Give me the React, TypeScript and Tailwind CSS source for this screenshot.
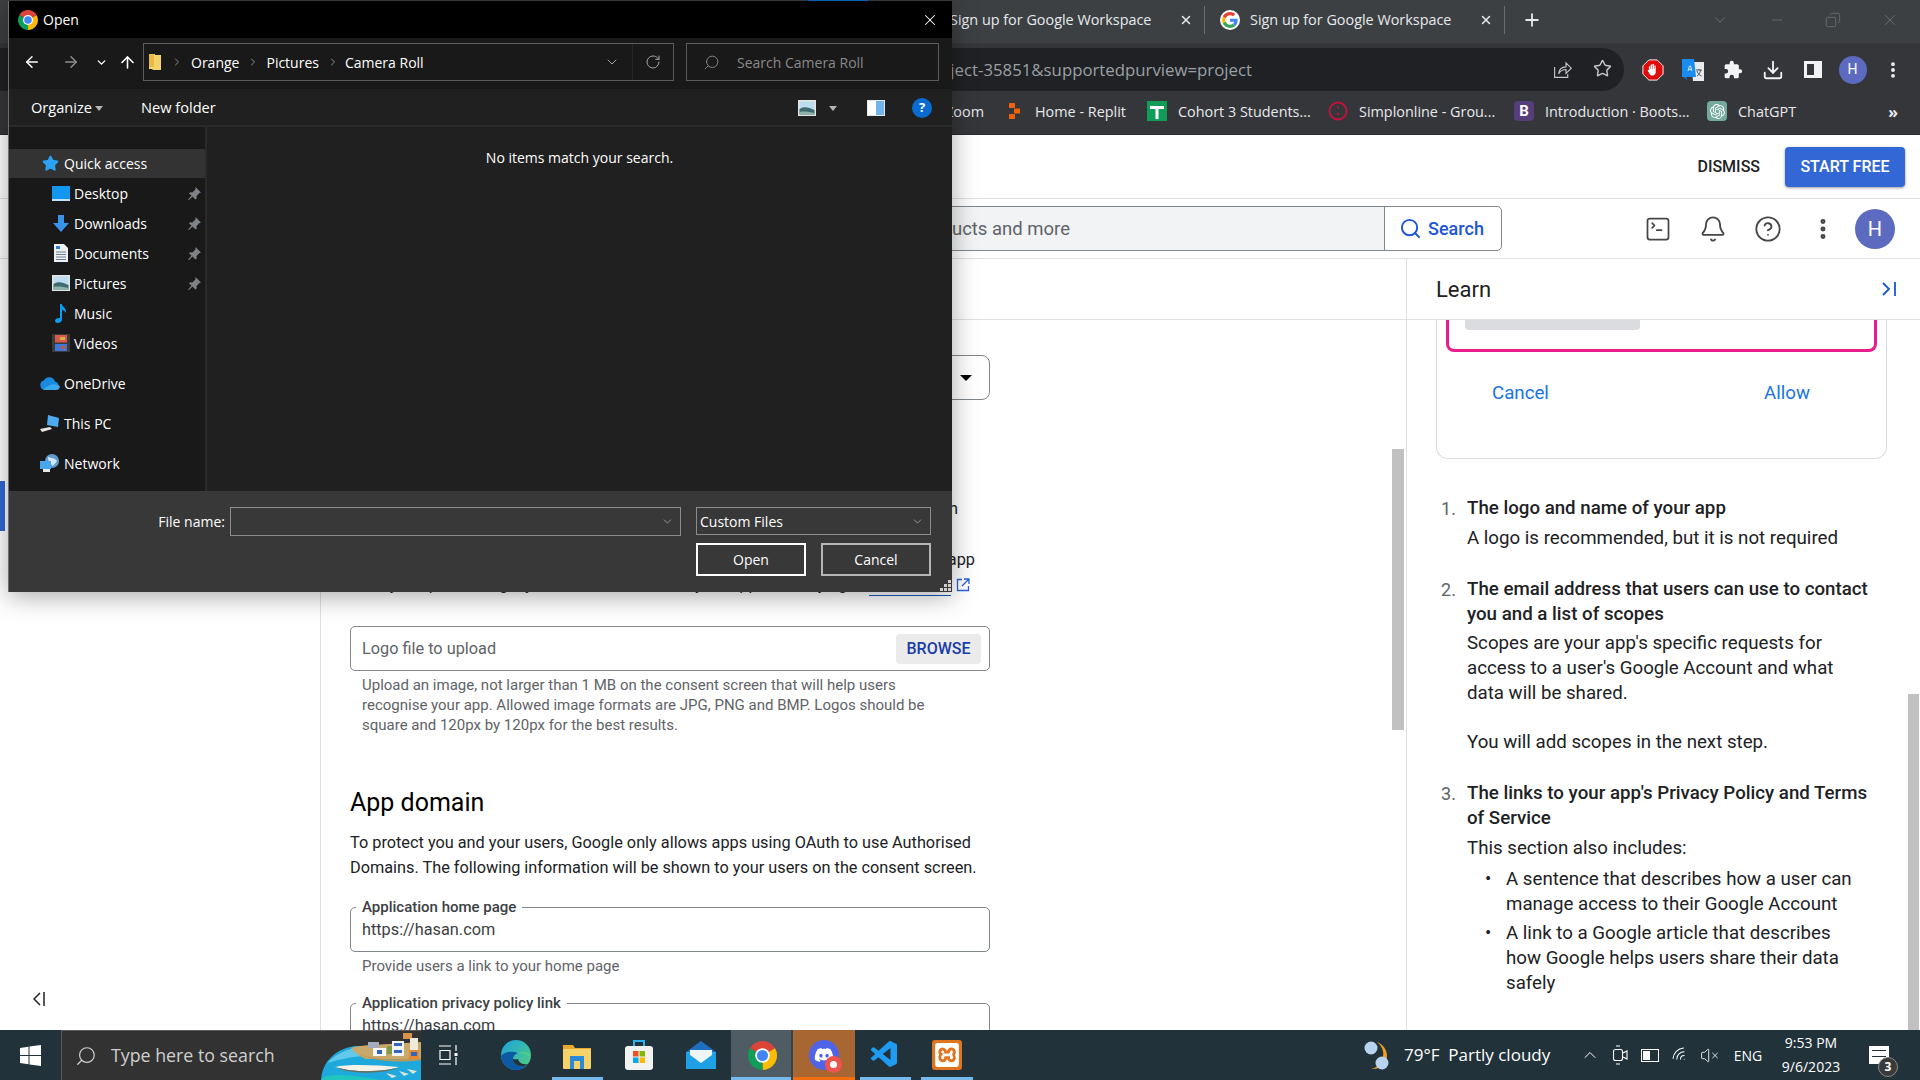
import {
  ArrowLeft,
  ArrowRight,
  ArrowUp,
  Bell,
  ChevronDown,
  ChevronRight,
  ChevronUp,
  CircleHelp,
  Copy,
  Download,
  EllipsisVertical,
  Minus,
  Plus,
  RotateCw,
  Search,
  SquareTerminal,
  Star,
  VolumeX,
  Wifi,
  X,
} from "lucide-react";
import { FaDiscord } from "react-icons/fa";
import { SiOpenai, SiXampp } from "react-icons/si";
import { VscVscode } from "react-icons/vsc";

const win = "font-['Open_Sans',sans-serif]";

function ChromeLogo({ size = 18 }: { size?: number }) {
  return (
    <svg width={size} height={size} viewBox="0 0 48 48">
      <path d="M24 24 41.3 14A20 20 0 0 0 6.7 14Z" fill="#db4437" />
      <path d="M24 24 41.3 14A20 20 0 0 1 24 44Z" fill="#fbbc05" />
      <path d="M24 24 24 44A20 20 0 0 1 6.7 14Z" fill="#0f9d58" />
      <circle cx="24" cy="24" r="10" fill="#fff" />
      <circle cx="24" cy="24" r="7.6" fill="#4285f4" />
    </svg>
  );
}

function GoogleLogo() {
  return (
    <svg width="20" height="20" viewBox="-6 -6 60 60">
      <circle cx="24" cy="24" r="30" fill="#fff" />
      <path fill="#EA4335" d="M24 9.5c3.54 0 6.71 1.22 9.21 3.6l6.85-6.85C35.9 2.38 30.47 0 24 0 14.62 0 6.51 5.38 2.56 13.22l7.98 6.19C12.43 13.72 17.74 9.5 24 9.5z" />
      <path fill="#4285F4" d="M46.98 24.55c0-1.57-.15-3.09-.38-4.55H24v9.02h12.94c-.58 2.96-2.26 5.48-4.78 7.18l7.73 6c4.51-4.18 7.09-10.36 7.09-17.65z" />
      <path fill="#FBBC05" d="M10.53 28.59c-.48-1.45-.76-2.99-.76-4.59s.27-3.14.76-4.59l-7.98-6.19C.92 16.46 0 20.12 0 24c0 3.88.92 7.54 2.56 10.78l7.97-6.19z" />
      <path fill="#34A853" d="M24 48c6.48 0 11.93-2.13 15.89-5.81l-7.73-6c-2.15 1.45-4.92 2.3-8.16 2.3-6.26 0-11.57-4.22-13.47-9.91l-7.98 6.19C6.51 42.62 14.62 48 24 48z" />
    </svg>
  );
}

function Tab() {
  return (
    <div className="flex h-[42px] w-[300px] shrink-0 items-center pb-[4px] pl-[15px]">
      <GoogleLogo />
      <span className={`${win} ml-[10px] w-[218px] text-[14.4px] whitespace-nowrap text-[#e8eaed]`}>Sign up for Google Workspace</span>
      <X className="ml-[11px] text-[#e8eaed]" size={14} strokeWidth={2.5} />
      <div className="ml-auto h-[28px] w-px bg-[#6b6f73]" />
    </div>
  );
}

function Bookmark({ icon, label, width }: { icon: React.ReactNode; label: string; width: string }) {
  return (
    <div className={`flex shrink-0 items-center ${width}`}>
      <div className="mr-[11px] flex w-[20px] justify-center">{icon}</div>
      <span className={`${win} text-[14.4px] whitespace-nowrap text-[#e8eaed]`}>{label}</span>
    </div>
  );
}

function TabStrip() {
  return (
    <div className="h-[43px] bg-[#3c4043]">
      <div className="ml-[808px] h-px w-[60px] bg-[#0a6cd0]" />
      <div className="flex">
        <div className="flex h-[42px] w-[1505px] justify-end">
          <Tab />
          <Tab />
        </div>
        <div className="ml-[17px] flex h-[42px] w-[20px] items-center justify-center pb-[4px] text-[#e8eaed]">
          <Plus size={22} strokeWidth={2.2} />
        </div>
        <div className="ml-auto flex h-[42px] items-center pb-[4px] text-[#777b80]">
          <ChevronDown size={18} strokeWidth={1} className="mr-[40px]" />
          <Minus size={16} strokeWidth={1} className="mr-[40px]" />
          <Copy size={16} strokeWidth={1} className="mr-[40px] scale-x-[-1]" />
          <X size={18} strokeWidth={1} className="mr-[21px]" />
        </div>
      </div>
    </div>
  );
}

function AddressRow() {
  return (
    <div className="flex h-[48px] items-end bg-[#35363a]">
      <div className="flex h-[43px] w-[1624px] items-center rounded-r-full bg-[#202124]">
        <div className="flex w-[1252px] justify-end overflow-hidden">
          <span className={`${win} shrink-0 text-[16.8px] whitespace-nowrap text-[#9aa0a6]`}>
            project-35851&amp;supportedpurview=project
          </span>
        </div>
        <div className="ml-auto mr-[2px] flex text-[#c4c7ca]">
          <div className="flex w-10 justify-center">
            <svg width="21" height="21" viewBox="0 0 24 24" fill="none" stroke="currentColor" strokeWidth="1.300">
              <path d="M3 9v12h15v-4" />
              <path d="M7.500 17c.5-5 4-8 8.500-8V4.500l6 6-6 6V12c-3.500 0-6.500 1.500-8.500 5z" />
            </svg>
          </div>
          <div className="flex w-10 justify-center"><Star size={19} strokeWidth={1.8} /></div>
        </div>
      </div>
      <div className="ml-[9px] flex h-[43px] items-center text-[#f1f3f4]">
        <div className="flex w-10 justify-center">
          <svg width="22" height="22" viewBox="0 0 24 24">
            <path d="M7.5 1h9L23 7.5v9L16.5 23h-9L1 16.500v-9z" fill="#e00b0b" stroke="#fff" strokeWidth="1" />
            <path d="M7.500 12V8h1.500v3h.5V6h1.500v5h.5V5.500h1.500V11h.5V7h1.500v7.500c0 2-1.500 3.500-3.500 3.500s-3-1-3.800-2.800L6 12.500c.4-.6 1-.7 1.500-.5z" fill="#fff" />
          </svg>
        </div>
        <div className="flex w-10 justify-center">
          <svg width="22" height="24" viewBox="0 0 22 24">
            <path d="M9 4h13v19H11z" fill="#e8eaed" />
            <path d="M0 1h12l2 18H4l1 3-3-3H0z" fill="#1a8cf0" />
            <path d="M6 13l1.500-5h1l1.500 5M7 11.500h2" stroke="#fff" strokeWidth=".8" fill="none" />
            <path d="M14 12h6M17 11v1M15 18c2-1 3-3 3.500-6M15 13c.5 2 2 4 4.500 5" stroke="#444" strokeWidth=".9" fill="none" />
          </svg>
        </div>
        <div className="flex w-10 justify-center">
          <svg width="20" height="20" viewBox="0 0 24 24" fill="#f1f3f4">
            <path d="M20.500 11H19V7a2 2 0 0 0-2-2h-4V3.500a2.500 2.500 0 0 0-5 0V5H4a2 2 0 0 0-2 2v3.800h1.500a2.700 2.700 0 0 1 0 5.400H2V20a2 2 0 0 0 2 2h3.800v-1.500a2.700 2.700 0 0 1 5.400 0V22H17a2 2 0 0 0 2-2v-4h1.500a2.500 2.500 0 0 0 0-5z" />
          </svg>
        </div>
        <div className="flex w-10 justify-center"><Download size={22} strokeWidth={2} /></div>
        <div className="flex w-[39px] justify-center">
          <div className="h-[17px] w-[18px] border-[3px] border-r-[8px] border-[#f1f3f4] bg-[#35363a]" />
        </div>
        <div className="flex w-[41px] justify-center">
          <div className="flex h-[28px] w-[28px] items-center justify-center rounded-full bg-[#5c6bc0] font-[Roboto,sans-serif] text-[14px] text-white">H</div>
        </div>
        <div className="flex w-10 justify-center"><EllipsisVertical size={20} strokeWidth={2.6} /></div>
      </div>
    </div>
  );
}

function BookmarkRow() {
  return (
    <div className="flex h-[44px] items-center border-b border-[#2b2c2f] bg-[#35363a] pb-[2px]">
      <div className="flex w-[984px] shrink-0 justify-end">
        <span className={`${win} text-[14.4px] text-[#e8eaed]`}>Zoom</span>
      </div>
      <div className="flex pl-[20px]">
        <Bookmark
          width="w-[143px]"
          label="Home - Replit"
          icon={
            <svg width="16" height="16" viewBox="0 0 16 16" fill="#f26207">
              <rect x="3" y="0" width="6" height="5" rx=".6" />
              <rect x="8" y="5.500" width="6" height="5" rx=".6" />
              <rect x="3" y="11" width="6" height="5" rx=".6" />
            </svg>
          }
        />
        <Bookmark
          width="w-[181px]"
          label="Cohort 3 Students..."
          icon={
            <svg width="20" height="20" viewBox="0 0 20 20">
              <rect width="20" height="20" fill="#0f9d58" />
              <path d="M3 5h14v3h-5.500v10h-3V8H3z" fill="#fff" />
            </svg>
          }
        />
        <Bookmark
          width="w-[186px]"
          label="Simplonline - Grou..."
          icon={
            <svg width="20" height="20" viewBox="0 0 20 20" fill="none">
              <circle cx="10" cy="10" r="8.500" stroke="#c2133f" strokeWidth="1.800" />
              <path d="M10 5.500v2M10 12v2" stroke="#c2133f" strokeWidth="1.800" />
            </svg>
          }
        />
        <Bookmark
          width="w-[193px]"
          label="Introduction · Boots..."
          icon={
            <div className="flex h-[20px] w-[20px] items-center justify-center rounded-[4px] bg-[#563d7c] font-[Roboto,sans-serif] text-[15px] font-bold text-white">B</div>
          }
        />
        <Bookmark
          width="w-[100px]"
          label="ChatGPT"
          icon={
            <div className="flex h-[20px] w-[20px] items-center justify-center rounded-[4px] bg-[#74aa9c] text-white">
              <SiOpenai size={15} />
            </div>
          }
        />
      </div>
      <span className={`${win} ml-auto mr-[22px] text-[16px] font-bold text-[#e8eaed]`}>»</span>
    </div>
  );
}

function OutlineField({ label, value, className }: { label: string; value: string; className: string }) {
  return (
    <div className={`relative flex h-[45px] w-[640px] items-center rounded-[5px] border border-[#80868b] px-[11px] pt-[2px] ${className}`}>
      <span className="absolute -top-[10px] left-[5px] bg-white px-[6px] text-[15px] leading-[18px] font-medium text-[#3c4043]">{label}</span>
      <span className="text-[16.3px] text-[#3c4043]">{value}</span>
    </div>
  );
}

function FormColumn() {
  return (
    <div className="pl-[29px] text-[16.3px] text-[#202124]">
      <div className="mt-[35px] flex h-[45px] w-[640px] items-center justify-end rounded-[8px] border border-[#80868b] pr-[17px]">
        <div className="h-0 w-0 border-x-[6px] border-t-[6px] border-x-transparent border-t-black" />
      </div>
      <div className="mt-[97px] flex h-6 w-[608px] items-center justify-end whitespace-nowrap">with</div>
      <div className="mt-[27px] flex h-6 w-[625px] items-center justify-end whitespace-nowrap">app</div>
      <div className="mt-px flex h-6 items-center whitespace-nowrap">
        <span className="w-[519px] overflow-hidden">After you upload a logo, you will need to submit your app for verifying</span>
        <span className="w-[82px] border-b border-[#1a56c4] leading-[21px] text-[#1a56c4]">Learn more</span>
        <svg className="ml-[5px]" width="14" height="14" viewBox="0 0 14 14" fill="none" stroke="#2a62d8" strokeWidth="1.300">
          <path d="M6 1.500H1.500v11h11V8M8 1h5v5M13 1 6 8" />
        </svg>
      </div>
      <div className="mt-[29px] flex h-[45px] w-[640px] items-center justify-between rounded-[5px] border border-[#80868b] pr-2 pl-[11px]">
        <span className="pt-[1px] text-[#5f6368]">Logo file to upload</span>
        <span className="flex h-[30px] w-[85px] items-center justify-center rounded-[4px] bg-[#ebebeb] text-[16px] font-medium text-[#1a3ca8]">BROWSE</span>
      </div>
      <p className="mt-1 w-[590px] pl-3 text-[15px] leading-5 text-[#5f6368]">
        Upload an image, not larger than 1 MB on the consent screen that will help users recognise your app. Allowed image formats are JPG, PNG and BMP. Logos should be square and 120px by 120px for the best results.
      </p>
      <h2 className="mt-[52px] text-[25px] leading-8 font-normal text-black">App domain</h2>
      <p className="mt-[11px] w-[640px] leading-[25px]">
        To protect you and your users, Google only allows apps using OAuth to use Authorised Domains. The following information will be shown to your users on the consent screen.
      </p>
      <OutlineField className="mt-[27px]" label="Application home page" value="https://hasan.com" />
      <p className="mt-1 pl-3 text-[15px] leading-5 text-[#5f6368]">Provide users a link to your home page</p>
      <OutlineField className="mt-[27px]" label="Application privacy policy link" value="https://hasan.com" />
    </div>
  );
}

function ListItem({ n, title, children }: { n: number; title: string; children: React.ReactNode }) {
  return (
    <div className="flex">
      <span className="w-[26px] shrink-0 text-[18px] text-[#5f6368]">{n}.</span>
      <div className="w-[410px]">
        <div className="text-[18.7px] font-medium">{title}</div>
        {children}
      </div>
    </div>
  );
}

function Bullet({ children, className }: { children: React.ReactNode; className: string }) {
  return (
    <div className={`flex ${className}`}>
      <span className="w-[39px] pl-[18px]">•</span>
      <span className="w-[352px]">{children}</span>
    </div>
  );
}

function LearnPanel() {
  return (
    <div className="relative flex w-[514px] shrink-0 flex-col border-l border-[#e0e0e0]">
      <div className="flex h-[61px] shrink-0 items-center justify-between border-b border-[#e0e0e0] pr-[24px] pl-[29px]">
        <span className="text-[22px] text-[#202124]">Learn</span>
        <svg width="14" height="14" viewBox="0 0 14 14" fill="none" stroke="#1a56d6" strokeWidth="1.800">
          <path d="M1 1l6 6-6 6M13 0v14" />
        </svg>
      </div>
      <div className="flex-1 overflow-hidden pl-[29px] text-[18.7px] leading-[25px] text-[#202124]">
        <div className="h-[139px] w-[451px] rounded-b-xl border-x border-b border-[#dadce0]">
          <div className="mx-[9px] h-[32px] rounded-b-lg border-x-[3px] border-b-[3px] border-[#e91e8c] pl-[16px]">
            <div className="h-[10px] w-[175px] rounded-b-[4px] bg-[#dadce0]" />
          </div>
          <div className="mt-[29px] flex pl-[55px] text-[#1a73e8]">
            <span className="w-[272px]">Cancel</span>
            <span>Allow</span>
          </div>
        </div>
        <div className="mt-[37px] pl-[5px]">
          <ListItem n={1} title="The logo and name of your app">
            <p className="mt-[5px]">A logo is recommended, but it is not required</p>
          </ListItem>
          <div className="mt-[26px]">
            <ListItem n={2} title="The email address that users can use to contact you and a list of scopes">
              <p className="mt-[4px] w-[395px]">Scopes are your app's specific requests for access to a user's Google Account and what data will be shared.</p>
              <p className="mt-[24px]">You will add scopes in the next step.</p>
            </ListItem>
          </div>
          <div className="mt-[26px]">
            <ListItem n={3} title="The links to your app's Privacy Policy and Terms of Service">
              <p className="mt-[5px]">This section also includes:</p>
              <Bullet className="mt-[6px]">A sentence that describes how a user can manage access to their Google Account</Bullet>
              <Bullet className="mt-[4px]">A link to a Google article that describes how Google helps users share their data safely</Bullet>
            </ListItem>
          </div>
        </div>
      </div>
      <div className="absolute top-[435px] right-[1px] h-[336px] w-[11px] bg-[#c1c1c1]" />
    </div>
  );
}

function PageBody() {
  return (
    <div className="flex min-h-0 flex-1 flex-col bg-white font-[Roboto,sans-serif]">
      <div className="flex h-[64px] shrink-0 items-center justify-end border-b border-[#e0e0e0] pr-[15px]">
        <span className="mr-[25px] text-[16px] font-medium text-[#202124]">DISMISS</span>
        <span className="flex h-[40px] w-[120px] items-center justify-center rounded-[4px] bg-[#3367d6] text-[16px] font-medium text-white shadow-[0_1px_3px_rgba(0,0,0,0.4)]">START FREE</span>
      </div>
      <div className="flex h-[60px] shrink-0 items-center border-b border-[#e0e0e0]">
        <div className="ml-[500px] flex h-[45px] w-[1002px] rounded-[5px] border border-[#80868b] bg-[#f1f3f4]">
          <div className="flex w-[569px] shrink-0 items-center justify-end overflow-hidden pt-[2px]">
            <span className="shrink-0 text-[18.5px] whitespace-nowrap text-[#5f6368]">Search (/) for resources, docs, products and more</span>
          </div>
          <div className="ml-auto flex w-[117px] items-center justify-center gap-[6px] rounded-r-[5px] border-l border-[#80868b] bg-white pr-[3px] text-[18px] font-medium text-[#1a56d6]">
            <Search size={23} strokeWidth={2} />
            Search
          </div>
        </div>
        <div className="ml-auto flex items-center pr-[25px] text-[#444746]">
          <div className="flex w-[55px] justify-center"><SquareTerminal size={28} strokeWidth={1.5} /></div>
          <div className="flex w-[55px] justify-center"><Bell size={28} strokeWidth={1.6} /></div>
          <div className="flex w-[55px] justify-center"><CircleHelp size={28} strokeWidth={1.6} /></div>
          <div className="flex w-[55px] justify-center"><EllipsisVertical size={26} strokeWidth={2.6} /></div>
          <div className="ml-[5px] flex h-[40px] w-[40px] items-center justify-center rounded-full bg-[#5c6bc0] text-[20px] text-white">H</div>
        </div>
      </div>
      <div className="flex min-h-0 flex-1">
        <div className="w-[321px] shrink-0 border-r border-[#e0e0e0]">
          <div className="mt-[222px] h-[50px] w-[5px] bg-[#3367d6]" />
          <svg className="mt-[461px] ml-[33px]" width="12" height="14" viewBox="0 0 12 14" fill="none" stroke="#202124" strokeWidth="1.500">
            <path d="M7 1 1 7l6 6M11 0v14" />
          </svg>
        </div>
        <div className="relative min-w-0 flex-1 overflow-hidden">
          <div className="h-[61px] border-b border-[#e0e0e0]" />
          <FormColumn />
          <div className="absolute top-[190px] right-[2px] h-[281px] w-[12px] bg-[#c1c1c1]" />
        </div>
        <LearnPanel />
      </div>
    </div>
  );
}

function Pin() {
  return (
    <svg className="ml-auto mr-[4px]" width="13" height="13" viewBox="0 0 13 13" fill="#7d8388">
      <path d="M7.500 0 13 5.500l-1.500.6-3 3 .2 2.400-1.200 1L4.500 9.500 1 13l-1-.2L3.500 8.500 1 6.500l1-1.200 2.400.2 3-3z" />
    </svg>
  );
}

function SideItem({ icon, label, pinned, className = "" }: { icon: React.ReactNode; label: string; pinned?: boolean; className?: string }) {
  return (
    <div className={`flex h-[30px] items-center pl-[40px] ${className}`}>
      <div className="flex w-[24px] justify-center">{icon}</div>
      <span className="ml-[1px] text-[14px] text-white">{label}</span>
      {pinned && <Pin />}
    </div>
  );
}

function SideRoot({ icon, label, className = "" }: { icon: React.ReactNode; label: string; className?: string }) {
  return (
    <div className={`flex h-[30px] items-center pl-[29px] ${className}`}>
      <div className="flex w-[24px] justify-center">{icon}</div>
      <span className="ml-[2px] text-[14px] text-white">{label}</span>
    </div>
  );
}

const PictureIcon = ({ w = 18, h = 16 }: { w?: number; h?: number }) => (
  <svg width={w} height={h} viewBox="0 0 18 16">
    <rect width="18" height="16" fill="#e6e6e6" />
    <rect x="1.500" y="1.500" width="15" height="13" fill="#bcdcf0" />
    <path d="M1.500 9c4-3 9-2 15 1v4.500h-15z" fill="#3d6b6f" />
    <path d="M1.500 12c5-1 10 0 15 1v1.500h-15z" fill="#8fb3a8" />
  </svg>
);

function OpenDialog() {
  return (
    <div className={`${win} absolute top-px left-[8px] flex h-[591px] w-[944px] flex-col border-l border-[#6e6e6e] shadow-[0_4px_24px_rgba(0,0,0,0.35)]`}>
      <div className="flex h-[37px] shrink-0 items-center bg-black pl-[7px] text-white">
        <ChromeLogo size={24} />
        <span className="ml-[3px] text-[14px]">Open</span>
        <X className="ml-auto mr-[13px]" size={18} strokeWidth={1.4} />
      </div>
      <div className="flex h-[51px] shrink-0 items-center bg-[#191919] pb-[3px] text-white">
        <div className="flex w-[46px] justify-center"><ArrowLeft size={18} strokeWidth={2} /></div>
        <div className="flex w-[32px] justify-center text-[#8d8d8d]"><ArrowRight size={18} strokeWidth={2} /></div>
        <div className="flex w-[28px] justify-center"><ChevronDown size={13} strokeWidth={2.5} /></div>
        <div className="flex w-[24px] justify-center"><ArrowUp size={19} strokeWidth={2} /></div>
        <div className="ml-[4px] flex h-[38px] w-[531px] items-center border border-[#5c5c5c] text-[14px]">
          <svg className="ml-[5px]" width="12" height="16" viewBox="0 0 12 16">
            <path d="M0 0h6v1h6v15H4l-1-1H0z" fill="#f6d26a" />
            <path d="M0 0h5v13H0z" fill="#e9bb45" />
          </svg>
          <ChevronRight className="ml-[10px] text-[#8d8d8d]" size={12} />
          <span className="ml-[8px]">Orange</span>
          <ChevronRight className="ml-[8px] text-[#8d8d8d]" size={12} />
          <span className="ml-[7px]">Pictures</span>
          <ChevronRight className="ml-[8px] text-[#8d8d8d]" size={12} />
          <span className="ml-[6px]">Camera Roll</span>
          <ChevronDown className="ml-auto text-[#a5a5a5]" size={16} strokeWidth={1.5} />
          <div className="ml-[12px] h-full w-px bg-[#262626]" />
          <RotateCw className="mr-[12px] ml-[12px] text-[#a5a5a5]" size={16} strokeWidth={1.5} />
        </div>
        <div className="ml-[12px] flex h-[38px] w-[253px] items-center border border-[#5c5c5c] pl-[16px] text-[14px] text-[#8a8a8a]">
          <Search className="scale-x-[-1]" size={17} strokeWidth={1.3} />
          <span className="ml-[17px]">Search Camera Roll</span>
        </div>
      </div>
      <div className="flex h-[38px] shrink-0 items-center border-b-2 border-[#2a2a2a] bg-[#202020] pt-[2px] text-[14.6px] text-white">
        <span className="ml-[22px]">Organize</span>
        <div className="ml-[3px] h-0 w-0 border-x-[4px] border-t-[5px] border-x-transparent border-t-[#b5b5b5]" />
        <span className="ml-[38px]">New folder</span>
        <div className="ml-auto"><PictureIcon /></div>
        <div className="ml-[13px] h-0 w-0 border-x-[4px] border-t-[5px] border-x-transparent border-t-[#b5b5b5]" />
        <div className="ml-[30px] flex h-[16px] w-[18px] border border-[#e6e6e6] bg-white">
          <div className="ml-auto w-[8px] bg-[#6fb3e8]" />
        </div>
        <div className="mr-[20px] ml-[27px] flex h-[20px] w-[20px] items-center justify-center rounded-full bg-[#0a6cd0] text-[13px] font-bold">?</div>
      </div>
      <div className="flex min-h-0 flex-1">
        <div className="w-[198px] shrink-0 border-r-2 border-[#2a2a2a] bg-[#191919] pt-[22px]">
          <div className="flex h-[29px] items-center bg-[#333333] pl-[29px]">
            <div className="flex w-[24px] justify-center">
              <Star size={17} fill="#2aa3f2" stroke="#2aa3f2" />
            </div>
            <span className="ml-[2px] text-[14px] text-white">Quick access</span>
          </div>
          <SideItem
            pinned
            label="Desktop"
            icon={
              <svg width="18" height="15" viewBox="0 0 18 15">
                <rect width="18" height="15" fill="#1296f0" />
                <rect y="13" width="18" height="2" fill="#bfe3fb" />
              </svg>
            }
          />
          <SideItem
            pinned
            label="Downloads"
            icon={
              <svg width="16" height="17" viewBox="0 0 16 17" fill="#3a93ea">
                <path d="M5 0h6v8h5l-8 9-8-9h5z" />
              </svg>
            }
          />
          <SideItem
            pinned
            label="Documents"
            icon={
              <svg width="14" height="18" viewBox="0 0 14 18">
                <path d="M0 0h10l4 4v14H0z" fill="#eef1f4" />
                <path d="M2 8h10M2 10.500h10M2 13h10M2 15.500h10" stroke="#6d7f8f" />
                <path d="M2 2h4v3H2z" fill="#2a7fd6" />
              </svg>
            }
          />
          <SideItem pinned label="Pictures" icon={<PictureIcon />} />
          <SideItem
            label="Music"
            icon={
              <svg width="12" height="19" viewBox="0 0 12 19" fill="#0b9bf0">
                <path d="M5 0h1.800c.3 3 5 4 4.200 9-.8-2-3-3-4-3v9.500c0 2-2 3.500-4.500 3.500C.8 19 0 18 0 16.800 0 15 2.500 13.500 5 14z" />
              </svg>
            }
          />
          <SideItem
            label="Videos"
            icon={
              <svg width="18" height="18" viewBox="0 0 18 18">
                <rect width="18" height="18" fill="#3a3a3a" />
                <rect x="3" y="1" width="12" height="7.500" fill="#d9584f" />
                <rect x="3" y="10" width="12" height="7" fill="#3f78d8" />
                <rect x="8" y="3" width="5" height="3" fill="#d9b23a" />
                <rect x="9" y="12" width="4" height="3" fill="#c8553a" />
              </svg>
            }
          />
          <SideRoot
            className="mt-[10px]"
            label="OneDrive"
            icon={
              <svg width="20" height="13" viewBox="0 0 20 13">
                <path d="M5 13a5 5 0 0 1-1-9.800A6 6 0 0 1 15 4.500 4.500 4.500 0 0 1 16 13z" fill="#1a8ae0" />
                <path d="M3 13h13a4 4 0 0 0 4-3.500C16 6 10 6 3 13z" fill="#3ba9ee" />
              </svg>
            }
          />
          <SideRoot
            className="mt-[10px]"
            label="This PC"
            icon={
              <svg width="20" height="17" viewBox="0 0 20 17">
                <path d="M8 0l11 3-1 9-11-2z" fill="#4eaaf0" />
                <path d="M0 14l10-2 2 2-10 3z" fill="#e6e6e6" />
              </svg>
            }
          />
          <SideRoot
            className="mt-[10px]"
            label="Network"
            icon={
              <svg width="20" height="18" viewBox="0 0 20 18">
                <circle cx="12" cy="7" r="7" fill="#5f9bd0" />
                <path d="M8 3c3 1 7 1 9 4l-4 5c-2-2-5-4-5-9z" fill="#d5e7f5" />
                <rect x="0" y="7" width="11" height="8" fill="#47a6ee" />
                <rect x="3" y="15" width="7" height="3" fill="#e6e6e6" />
              </svg>
            }
          />
        </div>
        <div className="flex-1 bg-[#202020] pt-[21px] text-center text-[14px] leading-5 text-white">No items match your search.</div>
      </div>
      <div className="relative h-[101px] shrink-0 bg-[#383838] pt-[16px] text-[14px] text-white">
        <div className="flex">
          <div className="flex h-[29px] w-[216px] items-center justify-end">File name:</div>
          <div className="ml-[5px] flex h-[29px] w-[451px] items-center justify-end border border-[#8c8c8c] pr-[6px]">
            <ChevronDown className="text-[#c8c8c8]" size={13} strokeWidth={1.2} />
          </div>
          <div className="ml-[15px] flex h-[28px] w-[235px] items-center justify-between border border-[#8c8c8c] pr-[6px] pl-[3px]">
            Custom Files
            <ChevronDown className="text-[#c8c8c8]" size={13} strokeWidth={1.2} />
          </div>
        </div>
        <div className="mt-[7px] ml-[687px] flex">
          <div className="flex h-[33px] w-[110px] items-center justify-center border-2 border-white">Open</div>
          <div className="ml-[15px] flex h-[33px] w-[110px] items-center justify-center border-2 border-[#b5b5b5]">Cancel</div>
        </div>
        <svg className="absolute right-[1px] bottom-[1px]" width="11" height="11" viewBox="0 0 11 11" fill="#cfcfcf">
          <rect x="8" y="0" width="3" height="3" />
          <rect x="4" y="4" width="3" height="3" />
          <rect x="8" y="4" width="3" height="3" />
          <rect x="0" y="8" width="3" height="3" />
          <rect x="4" y="8" width="3" height="3" />
          <rect x="8" y="8" width="3" height="3" />
        </svg>
      </div>
    </div>
  );
}

function BeachArt() {
  return (
    <svg width="100" height="50" viewBox="0 0 100 50">
      <path d="M0 50C1 32 14 19 34 16h66v34z" fill="#1ea9dc" />
      <path d="M6 33c8-8 18-13 28-15l8 8C30 27 16 30 6 33z" fill="#62c9ea" />
      <path d="M30 18c10-3 20-3 40-4l30-2v17H45c-5-2-12-7-15-11z" fill="#c9a96a" />
      <path d="M36 24c18 6 40 6 64 4v2c-20 3-46 2-64-6z" fill="#b8965c" />
      <path d="M14 37c14-3 40-2 64 0-14 5-46 6-64 0z" fill="#f6f2e6" />
      <path d="M14 37c18 6 50 5 64 0-12 7-50 8-64 0z" fill="#6d6a58" />
      <path d="M0 50c4-8 30-5 60 0z" fill="#1fc6c0" />
      <path d="M65 43l11 3-5 2zM78 41l10 3-5 2zM86 39l10 2-4 3z" fill="#dfe2d8" />
      <rect x="47" y="12" width="11" height="6" fill="#a6acbc" />
      <rect x="52" y="18" width="13" height="8" fill="#f8f8f8" />
      <rect x="56" y="20" width="5" height="4" fill="#2e66c0" />
      <rect x="66" y="16" width="5" height="8" fill="#7d9b48" />
      <rect x="71" y="11" width="12" height="15" fill="#f4f4f8" />
      <rect x="73" y="13" width="8" height="3" fill="#2e66c0" />
      <rect x="73" y="20" width="8" height="3" fill="#2e66c0" />
      <rect x="82" y="3" width="9" height="6" fill="#d9924a" />
      <rect x="89" y="8" width="8" height="12" fill="#efe9da" />
      <rect x="88" y="20" width="10" height="9" fill="#e58a32" />
      <rect x="90" y="22" width="6" height="4" fill="#2e66c0" />
    </svg>
  );
}

function TaskIcon({ children, bar, className = "" }: { children: React.ReactNode; bar?: boolean; className?: string }) {
  return (
    <div className={`relative flex h-[50px] w-[61.6px] shrink-0 items-center justify-center ${className}`}>
      {children}
      {bar && <div className="absolute right-[5px] bottom-0 left-[5px] h-[3px] bg-[#76b9ed]" />}
    </div>
  );
}

function Taskbar() {
  return (
    <div className="flex h-[50px] shrink-0 bg-[#22323a] font-['Open_Sans',sans-serif] text-white">
      <div className="flex w-[61px] items-center justify-center">
        <svg width="21" height="21" viewBox="0 0 21 21" fill="#fff">
          <path d="M0 3l8.500-1.200v8.200H0zM9.500 1.600 21 0v10H9.500zM0 11h8.500v8.200L0 18zM9.500 11H21v10L9.500 19.400z" />
        </svg>
      </div>
      <div className="relative flex w-[360px] items-center overflow-hidden border-t border-l border-[#5a5a5a] bg-[#323232]">
        <Search className="ml-[13px] scale-x-[-1] text-[#d0d0d0]" size={22} strokeWidth={1.3} />
        <span className="ml-[14px] text-[17.8px] text-[#cfcfcf]">Type here to search</span>
        <div className="absolute right-0 bottom-0"><BeachArt /></div>
      </div>
      <div className="flex w-[64px] items-center justify-center pr-[8px]">
        <svg width="20" height="20" viewBox="0 0 20 20" fill="none" stroke="#fff" strokeWidth="1.200">
          <path d="M0 1h12M0 19h12M1 5.500h10v9H1zM17 0v6M17 12v8" />
          <rect x="15.500" y="8" width="3" height="3" fill="#fff" stroke="none" />
        </svg>
      </div>
      <TaskIcon>
        <svg width="32" height="32" viewBox="0 0 32 32">
          <defs>
            <linearGradient id="edgeTop" x1="0" y1="0" x2="1" y2="1">
              <stop offset="0" stopColor="#1ba1e2" />
              <stop offset="1" stopColor="#52d17c" />
            </linearGradient>
          </defs>
          <circle cx="16" cy="16" r="15" fill="url(#edgeTop)" />
          <path d="M1 17C2 26 9 31 16 31c5 0 9-2 11-5-7 3-14 0-14-6 0-3 2-5 5-6-7-3-15 0-17 3z" fill="#0c59a4" />
          <path d="M18 14c5 0 9 1 13 4 0-2-3-5-7-5-3 0-5 0-6 1z" fill="#52d17c" />
          <path d="M13 20c0 6 7 9 14 6l1-1c-7 1-9-2-10-5-2 1-4 0-5 0z" fill="#22323a" />
        </svg>
      </TaskIcon>
      <TaskIcon bar>
        <svg width="28" height="28" viewBox="0 0 28 28">
          <path d="M0 4h10l2 3h16v4H0z" fill="#e8a92c" />
          <rect y="8" width="28" height="20" rx="1" fill="#f6d26a" />
          <rect x="7" y="15" width="14" height="13" fill="#2a8ad8" />
          <rect x="11" y="20" width="6" height="8" fill="#f6d26a" />
        </svg>
      </TaskIcon>
      <TaskIcon>
        <svg width="28" height="30" viewBox="0 0 28 30">
          <path d="M9 6V1h10v5" fill="none" stroke="#2bb2e8" strokeWidth="2" />
          <rect y="6" width="28" height="24" rx="3" fill="#f2f2f2" />
          <rect x="8" y="11" width="5.500" height="5.500" fill="#f25022" />
          <rect x="14.500" y="11" width="5.500" height="5.500" fill="#7fba00" />
          <rect x="8" y="17.500" width="5.500" height="5.500" fill="#00a4ef" />
          <rect x="14.500" y="17.500" width="5.500" height="5.500" fill="#ffb900" />
        </svg>
      </TaskIcon>
      <TaskIcon>
        <svg width="30" height="28" viewBox="0 0 30 28">
          <path d="M0 11 15 0l15 11v17H0z" fill="#1e6fc0" />
          <rect y="11" width="30" height="17" fill="#2ba6e8" />
          <path d="M4 9h22v6l-11 8-11-8z" fill="#eef6fc" />
          <path d="M0 11l15 11 15-11v17H0z" fill="#1fa0e6" />
        </svg>
      </TaskIcon>
      <TaskIcon bar className="bg-[#505c63]">
        <ChromeLogo size={35} />
        <div className="absolute inset-x-0 bottom-0 h-[3px] bg-[#76b9ed]" />
        <div className="absolute top-0 right-0 h-full w-[2px] bg-[#37444b]" />
      </TaskIcon>
      <TaskIcon className="bg-[#a86632]">
        <div className="relative flex h-[30px] w-[30px] items-center justify-center rounded-full bg-[#4f63e8]">
          <FaDiscord className="text-white" size={20} />
          <div className="absolute -right-[3px] -bottom-[3px] flex h-[17px] w-[17px] items-center justify-center rounded-full bg-[#ef5350]">
            <div className="h-[7px] w-[7px] rounded-full bg-white" />
          </div>
        </div>
        <div className="absolute inset-x-0 bottom-0 h-[3px] bg-[#f26d0f]" />
      </TaskIcon>
      <TaskIcon bar>
        <VscVscode className="text-[#1f9cf0]" size={32} />
      </TaskIcon>
      <TaskIcon bar>
        <div className="flex h-[30px] w-[30px] items-center justify-center rounded-[3px] bg-[#e0741f]">
          <SiXampp className="text-white" size={24} />
        </div>
      </TaskIcon>
      <div className="ml-auto flex w-[558px] shrink-0 items-center">
        <svg width="32" height="32" viewBox="0 0 32 32">
          <path d="M15 3a15 15 0 0 1-6 27c9 1 16-5 16-13 0-6-4-12-10-14z" fill="#eea021" />
          <circle cx="9" cy="9" r="6.500" fill="#b9d2ef" />
          <circle cx="20" cy="24" r="6.500" fill="#b9d2ef" />
        </svg>
        <span className="ml-[10px] w-[171px] text-[17px] whitespace-pre">79°F  Partly cloudy</span>
        <div className="flex w-[30px] justify-center"><ChevronUp size={20} strokeWidth={1.2} /></div>
        <div className="flex w-[30px] justify-center">
          <svg width="15" height="20" viewBox="0 0 15 20" fill="none" stroke="#fff" strokeWidth="1.100">
            <rect x=".5" y="4.500" width="9" height="11" rx="2" />
            <path d="M10 8l4-2v8l-4-2M3 1h4M3 19h4" />
          </svg>
        </div>
        <div className="flex w-[30px] justify-center">
          <div className="flex h-[13px] w-[18px] border border-white p-px">
            <div className="w-[7px] bg-white" />
          </div>
        </div>
        <div className="flex w-[30px] justify-center"><Wifi className="-rotate-45" size={18} strokeWidth={1.3} /></div>
        <div className="flex w-[28px] justify-center"><VolumeX size={19} strokeWidth={1.1} /></div>
        <div className="w-[50px] text-center text-[14px]">ENG</div>
        <div className="w-[76px] text-center text-[14px] leading-6">
          <div>9:53 PM</div>
          <div>9/6/2023</div>
        </div>
        <div className="flex w-[60px] justify-center">
          <div className="relative h-[18px] w-[20px] bg-white pt-[4px] pl-[3px]">
            <div className="h-[7px] w-[14px] border-y border-[#22323a]" />
            <div className="absolute -right-[9px] -bottom-[13px] flex h-[20px] w-[20px] items-center justify-center rounded-full border border-[#8a8a8a] bg-[#3a3a3a] text-[12px] font-bold">3</div>
          </div>
        </div>
      </div>
    </div>
  );
}

export default function App() {
  return (
    <div className="relative flex h-[1080px] w-[1920px] flex-col overflow-hidden">
      <TabStrip />
      <AddressRow />
      <BookmarkRow />
      <PageBody />
      <Taskbar />
      <OpenDialog />
    </div>
  );
}
